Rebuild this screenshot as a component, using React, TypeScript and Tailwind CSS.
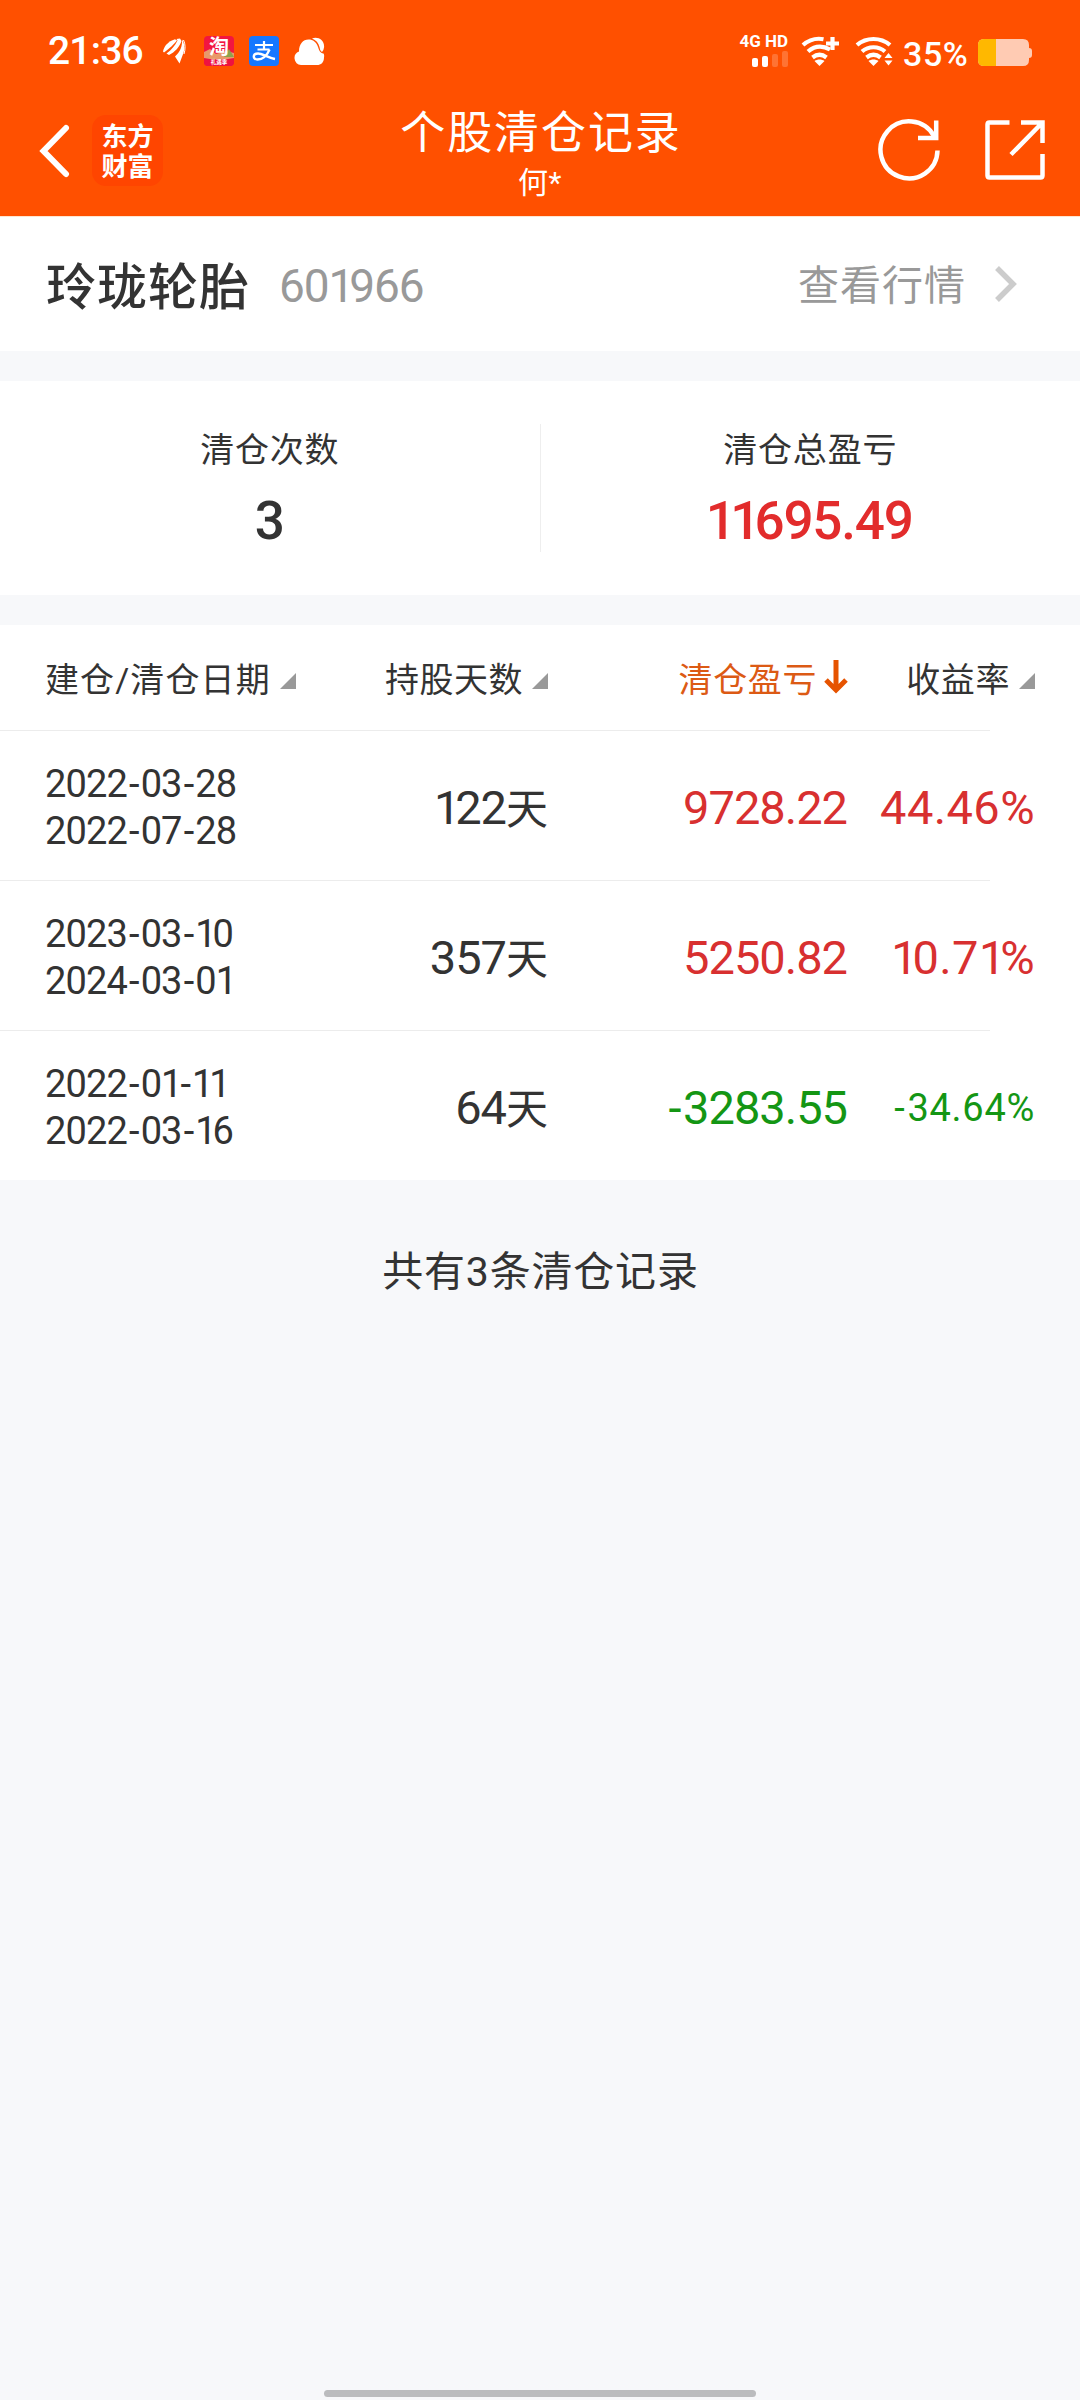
import { Fragment } from 'react';
import clsx from 'clsx';

const records = [
  { opened: '2022-03-28', closed: '2022-07-28', days: 122, profit: '9728.22', rate: '44.46%' },
  { opened: '2023-03-10', closed: '2024-03-01', days: 357, profit: '5250.82', rate: '10.71%' },
  { opened: '2022-01-11', closed: '2022-03-16', days: 64, profit: '-3283.55', rate: '-34.64%' },
];

// Digits are proportional: the 1 sits tighter than the others.
function Num({ children }: { children: string | number }) {
  return (
    <>
      {String(children).split('').map((char, index) =>
        char === '1' ? (
          <span key={index} className="tracking-[-0.11em]">1</span>
        ) : char === '-' ? (
          <span key={index} className="mx-[0.055em]">-</span>
        ) : (
          <Fragment key={index}>{char}</Fragment>
        ),
      )}
    </>
  );
}

function WifiIcon({ variant }: { variant: 'plus' | 'traffic' }) {
  return (
    <svg width="38" height="32" viewBox="0 0 38 32" fill="none" stroke="#fff" strokeWidth="4.200">
      <path d={variant === 'plus' ? 'M2 10C8 4.800 15 2.800 22.500 4.200' : 'M2 10C11.500 2 25.500 2 35 10'} />
      <path d={variant === 'plus' ? 'M7 16.500C13 11.300 21 10 29 14.500' : 'M7 16.500C13.500 10.800 23.500 10.800 30 16.500'} />
      <path d="M11.500 22.500c4.500-3.500 9.500-3.500 14 0" />
      <path d="M13.500 26c3-2 7-2 10 0L18.500 31z" fill="#fff" stroke="none" />
      {variant === 'plus' ? (
        <path d="M31.500 2v13M25 8.500h13" />
      ) : (
        <path d="M29.500 23l4-5 4 5zM29.500 25.500l4 5 4-5z" fill="#fff" stroke="none" />
      )}
    </svg>
  );
}

function StatusBar() {
  return (
    <div className="flex h-[84px] items-start pl-12 pr-12 pt-[33px] text-white">
      <span className="w-[115px] text-[39px] leading-9 font-medium tracking-[-0.8px]">21:36</span>
      <svg width="24" height="26" viewBox="0 0 24 26" className="mt-[5px]" fill="#fff">
        <path d="M0 13.500C1 8 5 3.500 12 1.200L14 2.500C11 6 7 10 1 14.500z" />
        <path d="M13.500 1L17 .500L18.500 3C16.500 9 12 14 6 17L3.500 15.500C8.500 12 12 7.500 14.500 2.500z" />
        <path d="M19 1.500C22 6 22 12 19.500 17.500L16.500 25.500L12 18.500C17 14 19.500 8.500 19 1.500z" />
        <path d="M20.500 2C22.500 6 22.500 11 21 16" fill="none" stroke="#fff" />
      </svg>
      <svg width="30" height="30" viewBox="0 0 30 30" className="mt-[3px] ml-[17px] overflow-visible">
        <rect width="30" height="30" rx="4" fill="#f21640" />
        <path d="M0 16l6-3 6 5 10-3 8 2v7H0z" fill="#e8996a" />
        <path d="M20 21l5-8 5 8z" fill="#8da24d" />
        <path d="M0 22q15 3 30 0v4q0 4-4 4H4q-4 0-4-4z" fill="#ee1240" />
        <text x="15" y="18" fontSize="20" fontWeight="700" textAnchor="middle" fill="#fff" fontFamily="'Noto Sans CJK SC', sans-serif">淘</text>
        <text x="15" y="28" fontSize="5.500" fontWeight="700" textAnchor="middle" fill="#fff" fontFamily="'Noto Sans CJK SC', sans-serif">礼遇季</text>
      </svg>
      <svg width="30" height="30" viewBox="0 0 30 30" className="mt-[3px] ml-[15px]" fill="none" stroke="#fff">
        <rect width="30" height="30" rx="4" fill="#1677ff" stroke="none" />
        <path d="M6 9h18M15 5v8M8.500 13.500H20.500" strokeWidth="2.200" />
        <path d="M20.500 13.500C18 20 13 23.500 8.500 23.500C3.500 23.500 3.500 17.500 9 17.500C13.500 17.500 18 21.500 26 23" strokeWidth="2.400" />
      </svg>
      <svg width="31" height="29" viewBox="0 0 31 29" className="mt-1 ml-[15px]" fill="#fff">
        <path d="M7 28a7 7 0 01-2-13.500C5 7 9 2.500 14.500 2.500c4.500 0 8 2.500 9.500 7.500 1 3 2 6 5.500 6.500q1 1 .5 4c0 5-3 7.500-7 7.500z" />
        <path d="M18 1.500c6-2.500 13 2 12 9q-.3 3-2 4.500c-1.800-1-2-3-2.500-5C24.500 6 22 3 18 1.500z" />
      </svg>

      <div className="ml-auto mt-px flex flex-col items-end">
        <span className="text-[17px] leading-[14px] font-bold">4G HD</span>
        <div className="mt-[3px] flex items-end gap-1">
          <i className="h-[9px] w-1.5 rounded-xs bg-white" />
          <i className="h-[11px] w-1.5 rounded-xs bg-white" />
          <i className="h-[13px] w-1.5 rounded-xs bg-white/20" />
          <i className="h-4 w-1.5 rounded-xs bg-white/20" />
        </div>
      </div>
      <div className="mt-0.5 ml-[13px] flex gap-4">
        <WifiIcon variant="plus" />
        <WifiIcon variant="traffic" />
      </div>
      <span className="mt-[3px] ml-[10px] w-[75px] text-[34px] leading-9 font-medium tracking-[0.6px]">35%</span>
      <svg width="54" height="27" viewBox="0 0 54 27" className="mt-1.5">
        <path d="M6 0H45q6 0 6 6V9q3 0 3 3v4q0 3-3 3v2q0 6-6 6H6q-6 0-6-6V6q0-6 6-6z" fill="#ffcbb3" />
        <path d="M18 0H6Q0 0 0 6V21q0 6 6 6H18z" fill="#ffb800" />
      </svg>
    </div>
  );
}

function NavBar() {
  return (
    <div className="flex h-[132px] items-start justify-between pr-8 pl-[39px] text-white">
      <div className="flex w-[241px] items-start pt-[31px]">
        <svg width="31" height="54" viewBox="0 0 31 54" className="mt-[9px]" fill="none" stroke="#fff" strokeWidth="6">
          <path d="M27 4L4.500 27L27 50" strokeLinecap="round" />
        </svg>
        <div className="ml-[22px] flex h-[71px] w-[71px] items-center justify-center rounded-[14px] bg-[#ff4500]">
          <span className="w-[54px] pb-0.5 pl-px font-['Noto_Sans_CJK_SC',sans-serif] text-[26px] leading-[30px] font-bold break-all">东方财富</span>
        </div>
      </div>
      <div className="flex flex-col items-center pt-[22px]">
        <h1 className="text-[45px] leading-[56px] tracking-[1.9px]">个股清仓记录</h1>
        <p className="mt-px pr-0.5 text-[30px] leading-10 tracking-[0.5px]">何*</p>
      </div>
      <div className="flex w-[246px] justify-end gap-[43px] pt-[34px]">
        <svg width="64" height="64" viewBox="0 0 64 64" fill="none" stroke="#fff" strokeWidth="4.500">
          <path d="M60.500 32.500A28.500 28.500 0 1 1 56.900 18" />
          <path d="M59.200 2.500V20H41" />
        </svg>
        <svg width="64" height="64" viewBox="0 0 64 64" fill="none" stroke="#fff" strokeWidth="4.500">
          <path d="M25.500 4.500H5.500q-2 0-2 2V57.500q0 2 2 2H56.500q2 0 2-2V36" />
          <path d="M37 4.500H58.500V25M58 5L27 36.500" />
        </svg>
      </div>
    </div>
  );
}

function SortMark() {
  return (
    <svg width="16" height="16" viewBox="0 0 16 16" className="ml-[9px]">
      <path d="M16 0v16H0z" fill="#999" />
    </svg>
  );
}

export default function App() {
  return (
    <div className="flex h-[2400px] w-[1080px] flex-col bg-[#f7f8fa] font-[Roboto,'Noto_Sans_CJK_SC',sans-serif] text-[#333]">
      <header className="bg-[#ff5000]">
        <StatusBar />
        <NavBar />
      </header>

      <section className="flex h-[135px] items-center border-t border-[#ffe5d0] bg-white pr-[63px] pl-[46px] text-[#999]">
        <h2 className="pt-[7px] text-[50px] leading-[60px] font-medium tracking-[1px] text-[#333]">玲珑轮胎</h2>
        <span className="ml-[29px] pt-1 text-[46px] tracking-[-1.1px]"><Num>601966</Num></span>
        <span className="ml-auto pt-1.5 text-[41px] tracking-[1px]">查看行情</span>
        <svg width="22" height="36" viewBox="0 0 22 36" className="ml-[29px]" fill="none" stroke="#ccc" strokeWidth="5.500">
          <path d="M2 2l16 16L2 34" />
        </svg>
      </section>

      <section className="mt-[30px] flex h-[214px] items-center bg-white text-center">
        <div className="flex-1">
          <p className="text-[34px] leading-[50px] tracking-[0.8px]">清仓次数</p>
          <p className="mt-4 text-[53px] leading-[60px] font-medium">3</p>
        </div>
        <div className="h-32 w-px bg-[#eee]" />
        <div className="flex-1">
          <p className="text-[34px] leading-[50px] tracking-[0.8px]">清仓总盈亏</p>
          <p className="mt-4 pr-0.5 text-[53px] leading-[60px] font-medium tracking-[-1.2px] text-[#e22c2c]"><Num>11695.49</Num></p>
        </div>
      </section>

      <section className="mt-[30px] bg-white">
        <div className="grid h-[105px] grid-cols-[251px_252px_300px_187px] items-center pt-1.5 pl-[45px] text-[34px]">
          <div className="flex items-center tracking-[1.1px] whitespace-nowrap">建仓/清仓日期<SortMark /></div>
          <div className="flex items-center justify-end tracking-[0.5px]">持股天数<SortMark /></div>
          <div className="flex items-center justify-end tracking-[0.6px] text-[#dc5a14]">
            清仓盈亏
            <svg width="24" height="35" viewBox="0 0 24 35" className="mb-1.5 ml-[7px]" fill="none" stroke="#e65300" strokeWidth="5">
              <path d="M12 0v30M2 20l10 10 10-10" />
            </svg>
          </div>
          <div className="flex items-center justify-end tracking-[0.6px]">收益率<SortMark /></div>
        </div>
        {records.map((record) => {
          const loss = record.profit.startsWith('-');
          return (
            <div key={record.opened}>
              <div className="h-px w-[990px] bg-[#ececec]" />
              <div className="grid h-[149px] grid-cols-[251px_252px_299px_188px] items-center pt-1.5 pl-[45px] text-right text-[47px]">
                <div className="pb-0.5 text-left text-[38px] leading-[47px] tracking-[-0.9px]">
                  <p><Num>{record.opened}</Num></p>
                  <p><Num>{record.closed}</Num></p>
                </div>
                <div className="tracking-[-1px]"><Num>{record.days}</Num><span className="text-[42px] tracking-normal">天</span></div>
                <div className={clsx('tracking-[-1px]', loss ? 'text-[#149614]' : 'text-[#d83030]')}><Num>{record.profit}</Num></div>
                <div className={clsx(loss ? 'text-[38px] tracking-[0.7px] text-[#149614]' : 'tracking-[0.4px] text-[#d83030]')}><Num>{record.rate}</Num></div>
              </div>
            </div>
          );
        })}
      </section>

      <p className="mt-[62px] pl-px text-center text-[41px] leading-[60px] tracking-[0.8px]">共有3条清仓记录</p>

      <div className="mx-auto mt-auto mb-[3px] h-[7px] w-[432px] rounded-full bg-[#bbbcbe]" />
    </div>
  );
}
